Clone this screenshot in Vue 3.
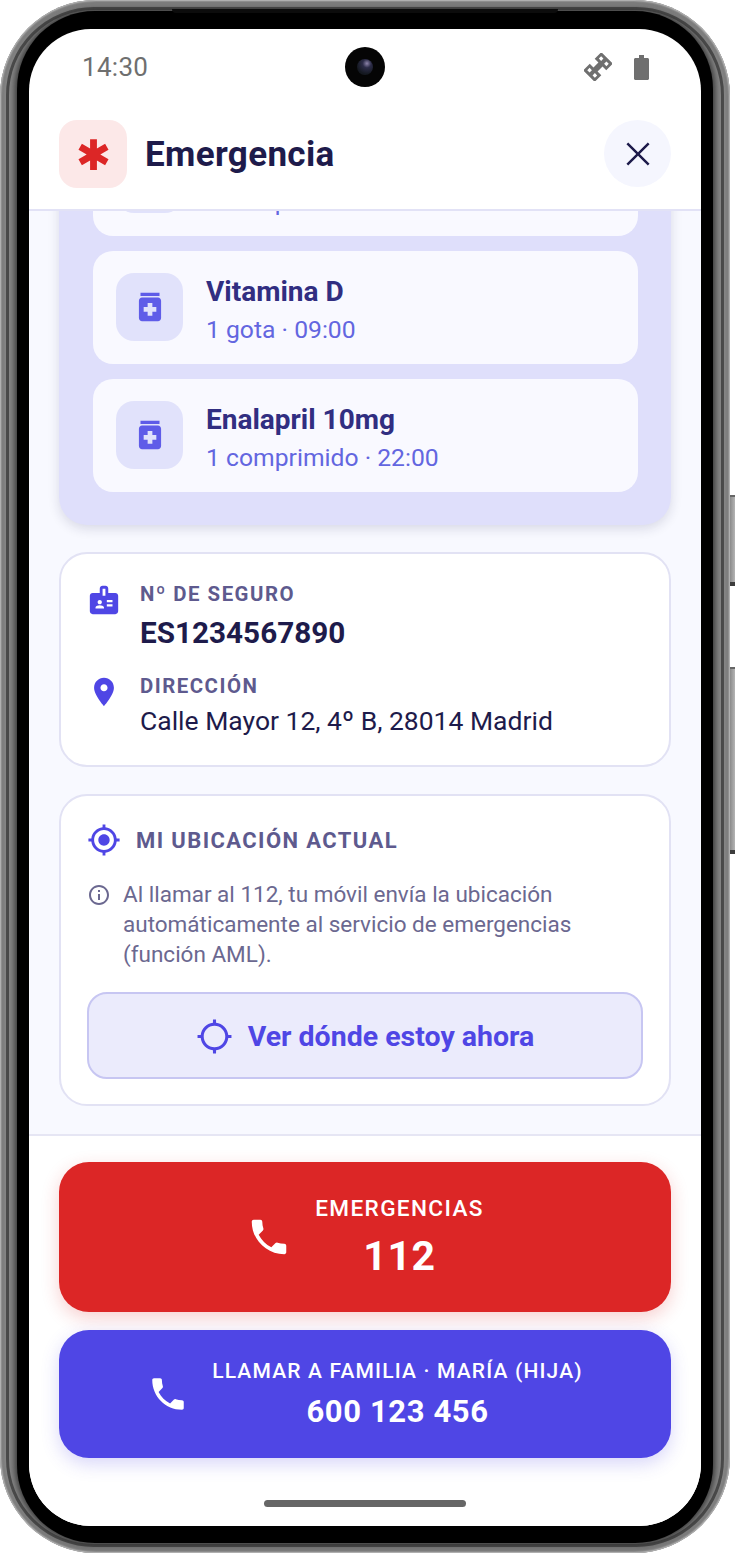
<script setup>
const medicamentos = [
  { nombre: '', detalle: '1 comprimido · 08:00' },
  { nombre: 'Vitamina D', detalle: '1 gota · 09:00' },
  { nombre: 'Enalapril 10mg', detalle: '1 comprimido · 22:00' }
];

const iconos = {
  medicina: 'M6 3h12v2H6zm11 3H7c-1.1 0-2 .9-2 2v11c0 1.1.9 2 2 2h10c1.1 0 2-.9 2-2V8c0-1.1-.9-2-2-2zm-1 9h-2.5v2.5h-3V15H8v-3h2.5V9.5h3V12H16v3z',
  llamada: 'M6.62 10.79c1.44 2.83 3.76 5.14 6.59 6.59l2.2-2.2c.27-.27.67-.36 1.02-.24 1.12.37 2.33.57 3.57.57.55 0 1 .45 1 1V20c0 .55-.45 1-1 1-9.39 0-17-7.61-17-17 0-.55.45-1 1-1h3.5c.55 0 1 .45 1 1 0 1.25.2 2.45.57 3.57.11.35.03.74-.25 1.02l-2.2 2.2z'
};
</script>

<template>
  <div class="telefono">
    <span class="boton boton-encendido"></span>
    <span class="boton boton-volumen"></span>
    <span class="ranura"></span>
    <div class="pantalla">
      <div class="estado">
        <span class="hora">14:30</span>
        <span class="camara"><i></i></span>
        <div class="estado-iconos">
          <!-- dos paneles con un eje central, girados 45 grados -->
          <svg class="satelite" viewBox="0 0 24 24">
            <path
              transform="rotate(-45 12 12)"
              fill-rule="evenodd"
              d="M1 5h8v4.5h6V5h8v14h-8v-4.5H9V19H1zM3.6 7.4v2.8h2.8V7.4zm0 6.4v2.8h2.8v-2.8zm14-6.4v2.8h2.8V7.4zm0 6.4v2.8h2.8v-2.8z"
            />
          </svg>
          <svg class="bateria" viewBox="0 0 15 25"><path d="M5 0h5v3h3.5c.8 0 1.5.7 1.5 1.5v19c0 .8-.7 1.5-1.5 1.5h-12C.7 25 0 24.3 0 23.5v-19C0 3.7.7 3 1.5 3H5z"/></svg>
        </div>
      </div>

      <header class="cabecera">
        <div class="cabecera-logo">
          <svg viewBox="0 0 24 24"><path d="M20.79 9.23l-2-3.46L14 8.54V3h-4v5.54L5.21 5.77l-2 3.46L8 12l-4.79 2.77 2 3.46L10 15.46V21h4v-5.54l4.79 2.77 2-3.46L16 12z"/></svg>
        </div>
        <h1>Emergencia</h1>
        <button class="cerrar">
          <svg viewBox="0 0 24 24"><path d="M18.6 6.4 17.6 5.4 12 11 6.4 5.4 5.4 6.4 11 12 5.4 17.6 6.4 18.6 12 13 17.6 18.6 18.6 17.6 13 12z"/></svg>
        </button>
      </header>

      <main class="contenido">
        <section class="medicacion">
          <div v-for="m in medicamentos" :key="m.detalle" class="medicamento">
            <div class="medicamento-icono">
              <svg viewBox="0 0 24 24"><path :d="iconos.medicina"/></svg>
            </div>
            <div class="medicamento-textos">
              <div class="medicamento-nombre">{{ m.nombre }}</div>
              <div class="medicamento-detalle">{{ m.detalle }}</div>
            </div>
          </div>
        </section>

        <section class="tarjeta datos">
          <div class="dato">
            <svg class="dato-icono" viewBox="0 0 24 24"><path d="M20 7h-5V4c0-1.1-.9-2-2-2h-2c-1.1 0-2 .9-2 2v3H4c-1.1 0-2 .9-2 2v11c0 1.1.9 2 2 2h16c1.1 0 2-.9 2-2V9c0-1.1-.9-2-2-2zM9 12c.83 0 1.5.67 1.5 1.5S9.83 15 9 15s-1.5-.67-1.5-1.5S8.17 12 9 12zm3 6H6v-.75c0-1 2-1.5 3-1.5s3 .5 3 1.5V18zm1-9h-2V4h2v5zm5 7.5h-4V15h4v1.5zm0-3h-4V12h4v1.5z"/></svg>
            <div>
              <div class="etiqueta">Nº DE SEGURO</div>
              <div class="seguro">ES1234567890</div>
            </div>
          </div>
          <div class="dato">
            <svg class="dato-icono" viewBox="0 0 24 24"><path d="M12 2C8.13 2 5 5.13 5 9c0 5.25 7 13 7 13s7-7.75 7-13c0-3.87-3.13-7-7-7zm0 9.5c-1.38 0-2.5-1.12-2.5-2.5s1.12-2.5 2.5-2.5 2.5 1.12 2.5 2.5-1.12 2.5-2.5 2.5z"/></svg>
            <div>
              <div class="etiqueta">DIRECCIÓN</div>
              <div class="direccion">Calle Mayor 12, 4º B, 28014 Madrid</div>
            </div>
          </div>
        </section>

        <section class="tarjeta ubicacion">
          <div class="ubicacion-titulo">
            <svg viewBox="0 0 24 24"><path d="M12 8c-2.21 0-4 1.79-4 4s1.79 4 4 4 4-1.79 4-4-1.79-4-4-4zm8.94 3c-.46-4.17-3.77-7.48-7.94-7.94V1h-2v2.06C6.83 3.52 3.52 6.83 3.06 11H1v2h2.06c.46 4.17 3.77 7.48 7.94 7.94V23h2v-2.06c4.17-.46 7.48-3.77 7.94-7.94H23v-2h-2.06zM12 19c-3.87 0-7-3.13-7-7s3.13-7 7-7 7 3.13 7 7-3.13 7-7 7z"/></svg>
            <span>MI UBICACIÓN ACTUAL</span>
          </div>
          <div class="aviso">
            <svg viewBox="0 0 24 24"><path d="M11 7h2v2h-2zm0 4h2v6h-2zm1-9C6.48 2 2 6.48 2 12s4.48 10 10 10 10-4.48 10-10S17.52 2 12 2zm0 18c-4.41 0-8-3.59-8-8s3.59-8 8-8 8 3.59 8 8-3.59 8-8 8z"/></svg>
            <p>Al llamar al 112, tu móvil envía la ubicación automáticamente al servicio de emergencias (función AML).</p>
          </div>
          <button class="ver-ubicacion">
            <svg viewBox="0 0 24 24"><path d="M20.94 11c-.46-4.17-3.77-7.48-7.94-7.94V1h-2v2.06C6.83 3.52 3.52 6.83 3.06 11H1v2h2.06c.46 4.17 3.77 7.48 7.94 7.94V23h2v-2.06c4.17-.46 7.48-3.77 7.94-7.94H23v-2h-2.06zM12 19c-3.87 0-7-3.13-7-7s3.13-7 7-7 7 3.13 7 7-3.13 7-7 7z"/></svg>
            <span>Ver dónde estoy ahora</span>
          </button>
        </section>
      </main>

      <footer class="acciones">
        <button class="llamar llamar-rojo">
          <svg viewBox="0 0 24 24"><path :d="iconos.llamada"/></svg>
          <div class="llamar-textos">
            <div class="llamar-etiqueta">EMERGENCIAS</div>
            <div class="llamar-numero">112</div>
          </div>
        </button>
        <button class="llamar llamar-azul">
          <svg viewBox="0 0 24 24"><path :d="iconos.llamada"/></svg>
          <div class="llamar-textos">
            <div class="llamar-etiqueta">LLAMAR A FAMILIA · MARÍA (HIJA)</div>
            <div class="llamar-numero">600 123 456</div>
          </div>
        </button>
        <div class="barra-inicio"></div>
      </footer>
    </div>
  </div>
</template>

<style>
html,
body {
  background: #fff;
}
</style>

<style scoped>
.telefono {
  position: relative;
  box-sizing: border-box;
  width: 730px;
  height: 1553px;
  padding: 29px 29px 27px;
  background: #868686;
  border-radius: 96px;
  box-shadow:
    inset 0 0 2px 1px #c4c4c4,
    inset 0 0 3px 4px #7a7a7a;
  font-family: Roboto, "Liberation Sans", sans-serif;
}

/* aro oscuro del chasis */
.telefono::before {
  content: "";
  position: absolute;
  inset: 7px 6px 6px;
  border: 3px solid #4a4a4a;
  border-radius: 88px;
}

/* marco negro alrededor de la pantalla */
.telefono::after {
  content: "";
  position: absolute;
  inset: 11px 17px 10px;
  background: #000;
  border-radius: 78px;
  box-shadow: 0 0 6px 2px #333;
}

.boton {
  position: absolute;
  left: 730px;
  width: 5px;
  background: linear-gradient(90deg, #8a8a8a, #b5b5b5);
  border-top: 2px solid #666;
  border-bottom: 4px solid #3c3c3c;
}

.boton-encendido {
  top: 495px;
  height: 85px;
}

.boton-volumen {
  top: 667px;
  height: 181px;
}

.ranura {
  position: absolute;
  z-index: 1;
  left: 172px;
  top: 9px;
  width: 386px;
  height: 4px;
  background: #0c0c0c;
  border-radius: 0 0 6px 6px;
}

.pantalla {
  position: relative;
  z-index: 1;
  display: flex;
  flex-direction: column;
  height: 100%;
  overflow: hidden;
  background: #fff;
  border-radius: 62px;
}

.estado {
  position: relative;
  flex: none;
  display: flex;
  align-items: center;
  justify-content: space-between;
  height: 76px;
  padding: 0 52px 0 53px;
}

.hora {
  color: #6f6f6f;
  font-size: 26px;
  letter-spacing: 0.3px;
}

.camara {
  position: absolute;
  left: 316px;
  top: 18px;
  width: 40px;
  height: 40px;
  background: #050505;
  border-radius: 50%;
}

.camara i {
  position: absolute;
  left: 12px;
  top: 12px;
  width: 16px;
  height: 16px;
  border-radius: 50%;
  background: radial-gradient(circle at 62% 28%, #8d84aa 0, #2c2c48 28%, #14181f 70%);
}

.estado-iconos {
  display: flex;
  align-items: center;
  gap: 22px;
}

.estado-iconos svg {
  fill: #6f6f6f;
}

.satelite {
  width: 28px;
  height: 28px;
}

.bateria {
  width: 15px;
  height: 25px;
}

.cabecera {
  flex: none;
  display: flex;
  align-items: flex-start;
  box-sizing: border-box;
  height: 106px;
  padding: 15px 30px 0;
  background: #fff;
  border-bottom: 2px solid #e2e2f6;
}

.cabecera-logo {
  display: flex;
  align-items: center;
  justify-content: center;
  width: 68px;
  height: 68px;
  background: #fce8e8;
  border-radius: 18px;
}

.cabecera-logo svg {
  width: 41px;
  height: 41px;
  fill: #dc2626;
}

h1 {
  flex: 1;
  margin: 1px 0 0 18px;
  color: #1e1b4b;
  font-size: 35px;
  font-weight: 700;
  letter-spacing: 0.35px;
  line-height: 68px;
}

.cerrar {
  display: flex;
  align-items: center;
  justify-content: center;
  width: 67px;
  height: 67px;
  padding: 0;
  background: #f5f6fe;
  border: none;
  border-radius: 50%;
}

.cerrar svg {
  width: 42px;
  height: 42px;
  fill: #1e1b4b;
}

.contenido {
  flex: 1;
  min-height: 0;
  display: flex;
  flex-direction: column;
  justify-content: flex-end;
  gap: 27px;
  overflow: hidden;
  padding: 0 30px 28px;
  background: #f8f9ff;
}

.medicacion {
  flex: none;
  display: flex;
  flex-direction: column;
  gap: 15px;
  padding: 0 33px 33px 34px;
  background: #dfdffb;
  border-radius: 28px;
  box-shadow: 0 4px 12px rgba(30, 27, 75, 0.14);
}

.medicamento {
  display: flex;
  align-items: center;
  gap: 23px;
  height: 113px;
  padding: 0 22px 0 23px;
  background: #f9f9ff;
  border-radius: 20px;
}

.medicamento-icono {
  display: flex;
  align-items: center;
  justify-content: center;
  width: 67px;
  height: 68px;
  margin-top: -1px;
  background: #e1e2fb;
  border-radius: 18px;
}

.medicamento-icono svg {
  width: 38px;
  height: 38px;
  fill: #5f5ce8;
}

.medicamento-textos {
  padding-top: 5px;
}

.medicamento-nombre {
  min-height: 36px;
  color: #312e81;
  font-size: 28px;
  font-weight: 700;
  line-height: 36px;
}

.medicamento-detalle {
  margin-top: 3px;
  color: #6366e0;
  font-size: 24.7px;
  line-height: 34px;
}

.tarjeta {
  flex: none;
  box-sizing: border-box;
  margin: 0;
  background: #fff;
  border: 2px solid #e2e2f4;
  border-radius: 28px;
}

.datos {
  display: flex;
  flex-direction: column;
  gap: 16px;
  height: 215px;
  padding: 25px 26px;
}

.dato {
  display: flex;
  gap: 19px;
}

.dato-icono {
  flex: none;
  width: 34px;
  height: 34px;
  margin-top: 4px;
  fill: #4f46e5;
}

.etiqueta {
  color: #5e5a8e;
  font-size: 20.4px;
  font-weight: 700;
  letter-spacing: 1.5px;
  line-height: 30px;
}

.seguro {
  margin-top: 2px;
  color: #1e1b4b;
  font-size: 29.7px;
  font-weight: 700;
  line-height: 44px;
}

.direccion {
  color: #1e1b4b;
  font-size: 26.5px;
  line-height: 40px;
}

.ubicacion {
  height: 312px;
  padding: 26px 26px 0;
}

.ubicacion-titulo {
  display: flex;
  align-items: center;
  gap: 15px;
  height: 36px;
  color: #5e5a8e;
  font-size: 22px;
  font-weight: 700;
  letter-spacing: 1.4px;
}

.ubicacion-titulo svg {
  flex: none;
  width: 34px;
  height: 34px;
  fill: #4f46e5;
}

.aviso {
  display: flex;
  gap: 12px;
  margin-top: 21px;
}

.aviso svg {
  flex: none;
  width: 24px;
  height: 24px;
  margin-top: 4px;
  fill: #6b6890;
}

.aviso p {
  margin: 0;
  color: #6b6890;
  font-size: 22.5px;
  line-height: 30px;
}

.ver-ubicacion {
  display: flex;
  align-items: center;
  justify-content: center;
  gap: 15px;
  box-sizing: border-box;
  width: 100%;
  height: 87px;
  margin-top: 23px;
  padding: 1px 0 0;
  background: #ebebfc;
  border: 2px solid #c7c6f2;
  border-radius: 20px;
  color: #4f46e5;
  font-family: inherit;
  font-size: 28.5px;
  font-weight: 700;
}

.ver-ubicacion svg {
  width: 37px;
  height: 37px;
  fill: #4f46e5;
}

.acciones {
  flex: none;
  display: flex;
  flex-direction: column;
  box-sizing: border-box;
  height: 392px;
  padding: 26px 30px 0;
  background: #fff;
  border-top: 2px solid #e6e6f4;
}

.llamar {
  flex: none;
  display: flex;
  align-items: center;
  justify-content: center;
  gap: 23px;
  width: 100%;
  padding: 0;
  border: none;
  border-radius: 30px;
  color: #fff;
  font-family: inherit;
}

.llamar-rojo {
  height: 150px;
  background: #dc2626;
  box-shadow: 0 6px 18px rgba(220, 38, 38, 0.22);
}

.llamar-rojo svg {
  width: 46px;
  height: 46px;
  fill: #fff;
}

.llamar-rojo .llamar-etiqueta {
  font-size: 22.6px;
  font-weight: 500;
  letter-spacing: 1.35px;
}

.llamar-rojo .llamar-numero {
  margin-top: 10px;
  font-size: 41px;
  font-weight: 700;
  letter-spacing: 0.6px;
}

.llamar-azul {
  height: 128px;
  margin-top: 18px;
  background: #4f46e5;
  box-shadow: 0 6px 18px rgba(79, 70, 229, 0.22);
}

.llamar-azul svg {
  width: 42px;
  height: 42px;
  fill: #fff;
}

.llamar-azul .llamar-etiqueta {
  font-size: 21px;
  font-weight: 500;
  letter-spacing: 1.17px;
}

.llamar-azul .llamar-numero {
  margin-top: 10px;
  font-size: 31px;
  font-weight: 700;
  letter-spacing: 0.6px;
}

.llamar-textos {
  text-align: center;
}

.barra-inicio {
  align-self: center;
  width: 202px;
  height: 7px;
  margin-top: 42px;
  background: #666;
  border-radius: 4px;
}
</style>
